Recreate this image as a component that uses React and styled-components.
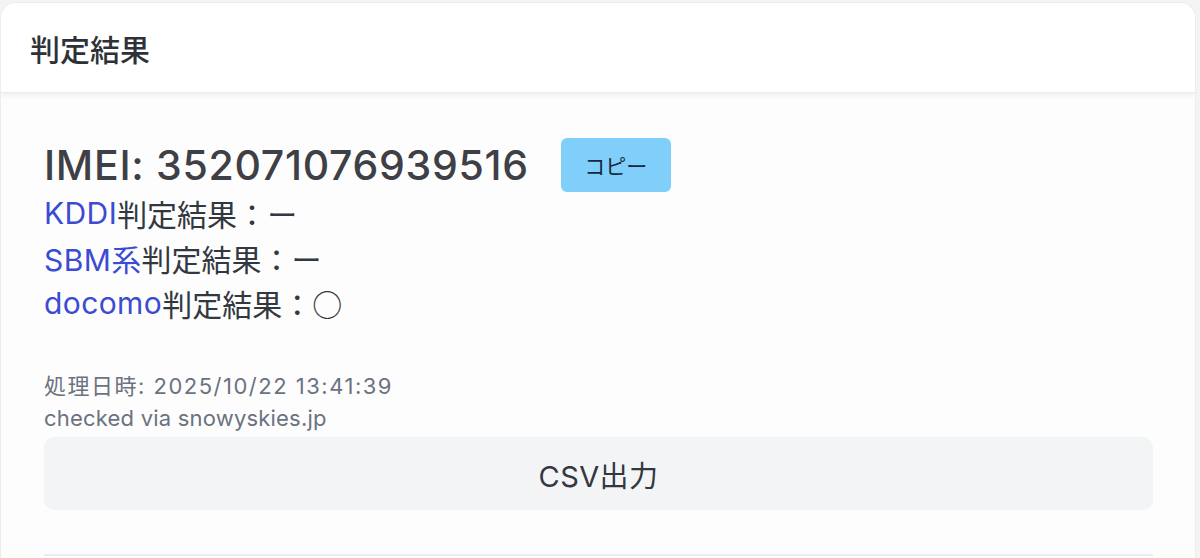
import React from "react";
import styled, { createGlobalStyle } from "styled-components";

const GlobalStyle = createGlobalStyle`
  html, body {
    margin: 0;
    padding: 0;
    background: #f4f4f5;
  }
  body {
    font-family: Inter, "Noto Sans CJK JP", sans-serif;
    color: #333840;
  }
`;

const Card = styled.div`
  width: 1196px;
  height: 556px;
  margin-top: 2px;
  background: #fdfdfd;
  border: 1px solid #ececec;
  border-bottom: none;
  border-radius: 16px 16px 0 0;
  overflow: hidden;
  box-sizing: border-box;
`;

const CardHeader = styled.div`
  height: 89px;
  display: flex;
  align-items: center;
  padding-left: 29px;
  background: #ffffff;
  box-shadow: 0 2px 6px rgba(0, 0, 0, 0.07);
  border-bottom: 1px solid #ebebeb;
  position: relative;
`;

const Title = styled.h2`
  margin: 0;
  font-family: "Noto Sans CJK JP", sans-serif;
  font-size: 30px;
  font-weight: 500;
  color: #2e3238;
`;

const Body = styled.div`
  padding: 45px 42px 0 43px;
`;

const ImeiRow = styled.div`
  display: flex;
  align-items: center;
  gap: 32px;
  height: 54px;
`;

const Imei = styled.div`
  font-size: 41px;
  font-weight: 500;
  letter-spacing: 0.7px;
  color: #3f3f46;
`;

const CopyButton = styled.button`
  width: 110px;
  height: 54px;
  border: none;
  border-radius: 6px;
  background: #80cffb;
  color: #15283f;
  font-family: "Noto Sans CJK JP", sans-serif;
  font-size: 21px;
  cursor: pointer;
`;

const Results = styled.div`
  display: flex;
  flex-direction: column;
  margin-top: -2px;
`;

const ResultLine = styled.div`
  display: flex;
  align-items: center;
  height: 45px;
  font-size: 30px;
  color: #333840;
  white-space: nowrap;
`;

const Carrier = styled.span`
  color: #3b4bd3;
  letter-spacing: 0.4px;
`;

const Mark = styled.span`
  font-family: "Noto Sans CJK JP", sans-serif;
`;

const Meta = styled.div`
  margin-top: 42px;
  display: flex;
  flex-direction: column;
`;

const MetaLine = styled.div`
  display: flex;
  align-items: center;
  height: 34px;
  font-size: 22px;
  color: #6b7280;
  white-space: pre;
  letter-spacing: ${({ $spread }) => ($spread ? "1.5px" : "0.2px")};
`;

const CsvButton = styled.button`
  display: block;
  width: 100%;
  height: 73px;
  margin-top: 2px;
  border: none;
  border-radius: 10px;
  background: #f3f4f6;
  color: #333840;
  font-family: Inter, "Noto Sans CJK JP", sans-serif;
  font-size: 29px;
  letter-spacing: 0.4px;
  cursor: pointer;
`;

const Divider = styled.div`
  margin-top: 44px;
  border-top: 2px solid #ececee;
`;

const results = [
  { carrier: "KDDI", value: "ー" },
  { carrier: "SBM系", value: "ー" },
  { carrier: "docomo", value: "○" },
];

export default function App() {
  return (
    <>
      <GlobalStyle />
      <Card>
        <CardHeader>
          <Title>判定結果</Title>
        </CardHeader>
        <Body>
          <ImeiRow>
            <Imei>IMEI: 352071076939516</Imei>
            <CopyButton>コピー</CopyButton>
          </ImeiRow>
          <Results>
            {results.map((r) => (
              <ResultLine key={r.carrier}>
                <Carrier>{r.carrier}</Carrier>判定結果：<Mark>{r.value}</Mark>
              </ResultLine>
            ))}
          </Results>
          <Meta>
            <MetaLine $spread>処理日時: 2025/10/22 13:41:39</MetaLine>
            <MetaLine>checked via snowyskies.jp</MetaLine>
          </Meta>
          <CsvButton>CSV出力</CsvButton>
          <Divider />
        </Body>
      </Card>
    </>
  );
}
